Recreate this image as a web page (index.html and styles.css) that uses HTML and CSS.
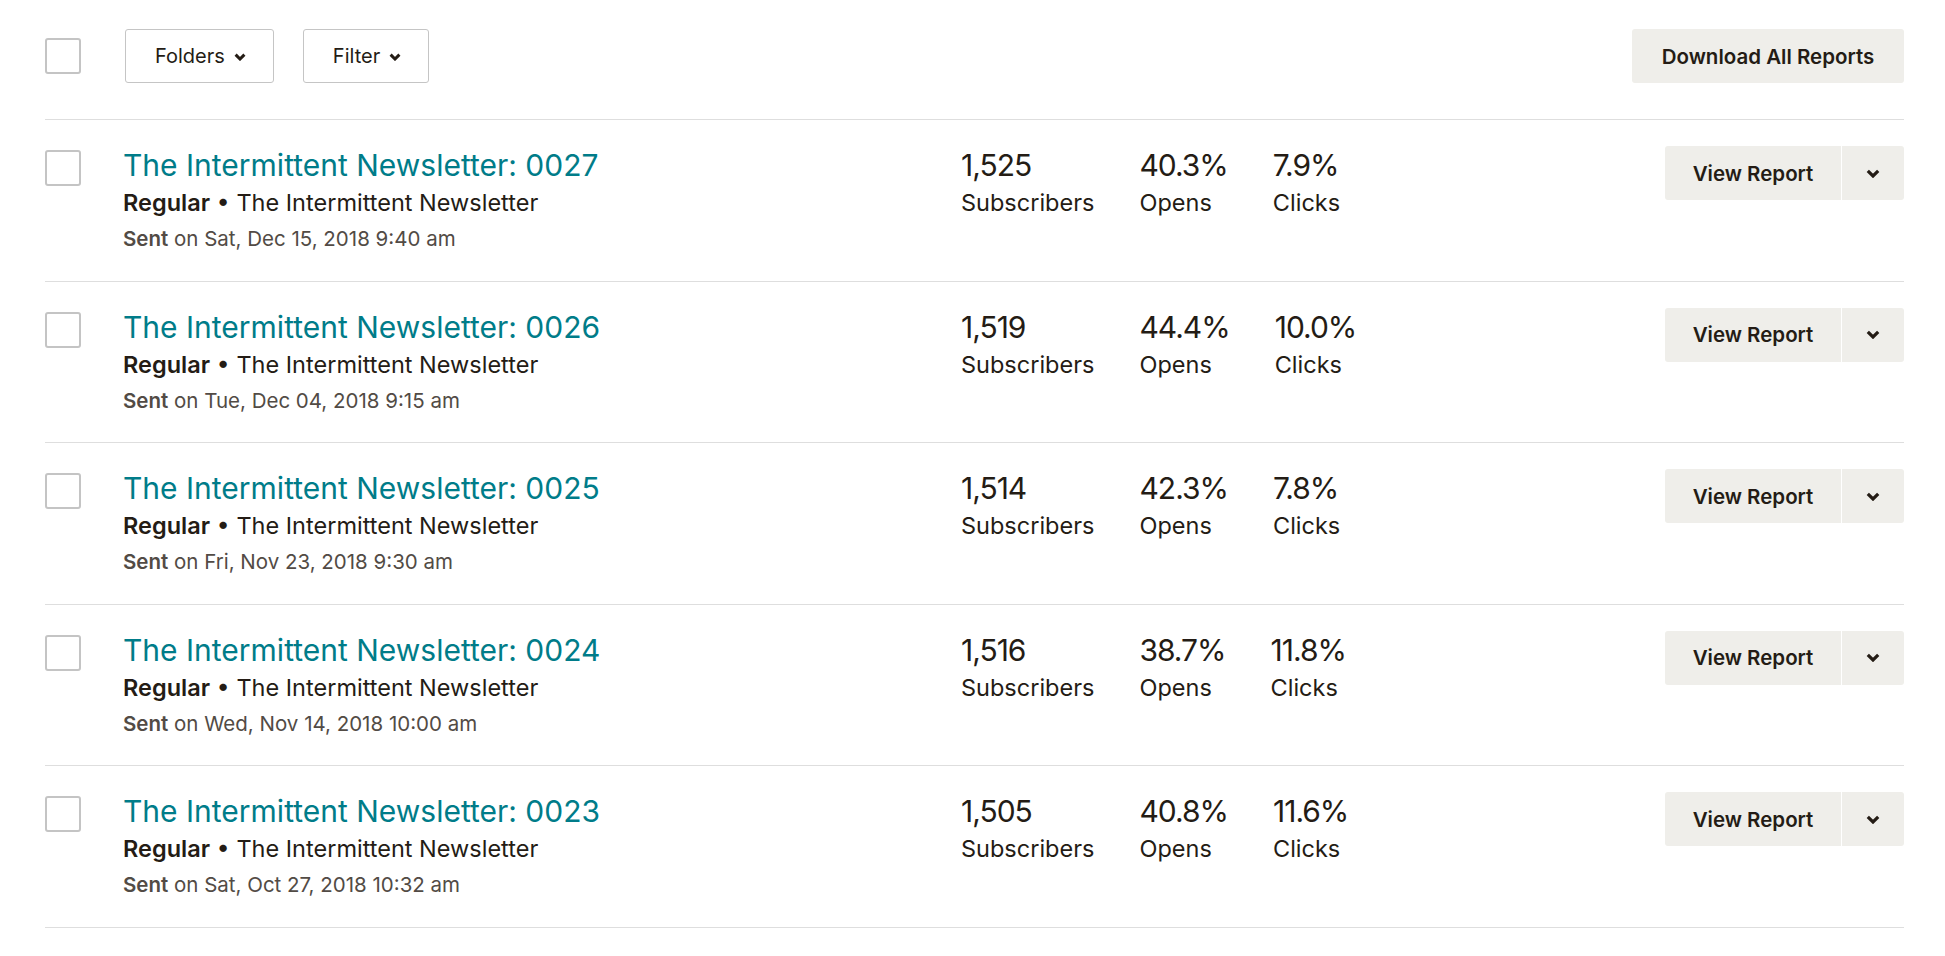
FILE: index.html
```html
<!DOCTYPE html>
<html lang="en">
<head>
<meta charset="utf-8">
<title>Campaign Reports</title>
<link rel="stylesheet" href="styles.css">
</head>
<body>
<div class="page">
  <div class="toolbar">
    <span class="checkbox"></span>
    <button class="btn-outline">Folders <svg class="chev" viewBox="0 0 12 8" width="12" height="8"><path d="M1.6 1.6 L6 6 L10.4 1.6" fill="none" stroke="currentColor" stroke-width="3"/></svg></button>
    <button class="btn-outline">Filter <svg class="chev" viewBox="0 0 12 8" width="12" height="8"><path d="M1.6 1.6 L6 6 L10.4 1.6" fill="none" stroke="currentColor" stroke-width="3"/></svg></button>
    <button class="btn-solid download">Download All Reports</button>
  </div>

  <div class="list">
    <div class="row">
      <span class="checkbox row-check"></span>
      <div class="info">
        <a class="title">The Intermittent Newsletter: 0027</a>
        <div class="sub"><b>Regular</b> • The Intermittent Newsletter</div>
        <div class="date"><b>Sent</b> on Sat, Dec 15, 2018 9:40 am</div>
      </div>
      <div class="stats">
        <div class="stat"><div class="num">1,525</div><div class="lbl">Subscribers</div></div>
        <div class="stat"><div class="num">40.3%</div><div class="lbl">Opens</div></div>
        <div class="stat"><div class="num">7.9%</div><div class="lbl">Clicks</div></div>
      </div>
      <div class="split">
        <button class="btn-solid split-main">View Report</button>
        <button class="btn-solid split-toggle"><svg viewBox="0 0 14 9" width="14" height="9"><path d="M1.8 1.8 L7 7 L12.2 1.8" fill="none" stroke="currentColor" stroke-width="3.2"/></svg></button>
      </div>
    </div>

    <div class="row">
      <span class="checkbox row-check"></span>
      <div class="info">
        <a class="title">The Intermittent Newsletter: 0026</a>
        <div class="sub"><b>Regular</b> • The Intermittent Newsletter</div>
        <div class="date"><b>Sent</b> on Tue, Dec 04, 2018 9:15 am</div>
      </div>
      <div class="stats">
        <div class="stat"><div class="num">1,519</div><div class="lbl">Subscribers</div></div>
        <div class="stat"><div class="num">44.4%</div><div class="lbl">Opens</div></div>
        <div class="stat"><div class="num">10.0%</div><div class="lbl">Clicks</div></div>
      </div>
      <div class="split">
        <button class="btn-solid split-main">View Report</button>
        <button class="btn-solid split-toggle"><svg viewBox="0 0 14 9" width="14" height="9"><path d="M1.8 1.8 L7 7 L12.2 1.8" fill="none" stroke="currentColor" stroke-width="3.2"/></svg></button>
      </div>
    </div>

    <div class="row">
      <span class="checkbox row-check"></span>
      <div class="info">
        <a class="title">The Intermittent Newsletter: 0025</a>
        <div class="sub"><b>Regular</b> • The Intermittent Newsletter</div>
        <div class="date"><b>Sent</b> on Fri, Nov 23, 2018 9:30 am</div>
      </div>
      <div class="stats">
        <div class="stat"><div class="num">1,514</div><div class="lbl">Subscribers</div></div>
        <div class="stat"><div class="num">42.3%</div><div class="lbl">Opens</div></div>
        <div class="stat"><div class="num">7.8%</div><div class="lbl">Clicks</div></div>
      </div>
      <div class="split">
        <button class="btn-solid split-main">View Report</button>
        <button class="btn-solid split-toggle"><svg viewBox="0 0 14 9" width="14" height="9"><path d="M1.8 1.8 L7 7 L12.2 1.8" fill="none" stroke="currentColor" stroke-width="3.2"/></svg></button>
      </div>
    </div>

    <div class="row">
      <span class="checkbox row-check"></span>
      <div class="info">
        <a class="title">The Intermittent Newsletter: 0024</a>
        <div class="sub"><b>Regular</b> • The Intermittent Newsletter</div>
        <div class="date"><b>Sent</b> on Wed, Nov 14, 2018 10:00 am</div>
      </div>
      <div class="stats">
        <div class="stat"><div class="num">1,516</div><div class="lbl">Subscribers</div></div>
        <div class="stat"><div class="num">38.7%</div><div class="lbl">Opens</div></div>
        <div class="stat"><div class="num">11.8%</div><div class="lbl">Clicks</div></div>
      </div>
      <div class="split">
        <button class="btn-solid split-main">View Report</button>
        <button class="btn-solid split-toggle"><svg viewBox="0 0 14 9" width="14" height="9"><path d="M1.8 1.8 L7 7 L12.2 1.8" fill="none" stroke="currentColor" stroke-width="3.2"/></svg></button>
      </div>
    </div>

    <div class="row">
      <span class="checkbox row-check"></span>
      <div class="info">
        <a class="title">The Intermittent Newsletter: 0023</a>
        <div class="sub"><b>Regular</b> • The Intermittent Newsletter</div>
        <div class="date"><b>Sent</b> on Sat, Oct 27, 2018 10:32 am</div>
      </div>
      <div class="stats">
        <div class="stat"><div class="num">1,505</div><div class="lbl">Subscribers</div></div>
        <div class="stat"><div class="num">40.8%</div><div class="lbl">Opens</div></div>
        <div class="stat"><div class="num">11.6%</div><div class="lbl">Clicks</div></div>
      </div>
      <div class="split">
        <button class="btn-solid split-main">View Report</button>
        <button class="btn-solid split-toggle"><svg viewBox="0 0 14 9" width="14" height="9"><path d="M1.8 1.8 L7 7 L12.2 1.8" fill="none" stroke="currentColor" stroke-width="3.2"/></svg></button>
      </div>
    </div>
  </div>
</div>
</body>
</html>
```

FILE: styles.css
```css
* { box-sizing: border-box; }

body {
  margin: 0;
  background: #ffffff;
  color: #241c15;
  font-family: Inter, "Liberation Sans", Arial, sans-serif;
}

.page {
  padding: 29px 41px 0 45px;
}

.toolbar {
  display: flex;
  align-items: center;
  height: 54px;
  margin-bottom: 36px;
}

.checkbox {
  display: block;
  width: 36px;
  height: 36px;
  border: 2px solid #c4c4c4;
  border-radius: 3px;
  background: #fff;
  flex: 0 0 36px;
}

.btn-outline {
  display: inline-flex;
  align-items: center;
  gap: 9px;
  height: 54px;
  padding: 0 27px 0 29px;
  border: 1px solid #c5c5c5;
  border-radius: 3px;
  background: #fff;
  color: #241c15;
  font-family: inherit;
  font-size: 20px;
  font-weight: 400;
  margin-left: 29px;
}

.toolbar .checkbox + .btn-outline {
  margin-left: 44px;
}

.chev {
  display: block;
  margin-top: 1px;
}

.btn-solid {
  display: inline-flex;
  align-items: center;
  justify-content: center;
  height: 54px;
  border: 0;
  border-radius: 3px;
  background: #efeeea;
  color: #241c15;
  font-family: inherit;
  font-size: 20.5px;
  font-weight: 600;
}

.download {
  margin-left: auto;
  width: 272px;
}

.list {
  border-bottom: 1px solid #dedede;
}

.row {
  display: flex;
  align-items: flex-start;
  height: 161.6px;
  padding-top: 27px;
  border-top: 1px solid #dedede;
}

.row-check {
  margin-top: 3px;
}

.info {
  flex: 0 0 838px;
  margin-left: 42px;
  display: flex;
  flex-direction: column;
}

.title {
  font-size: 30px;
  line-height: 36px;
  color: #007c89;
  text-decoration: none;
}

.sub {
  font-size: 23.5px;
  line-height: 30px;
  margin-top: 5px;
}

.sub b {
  font-weight: 600;
}

.date {
  font-size: 20.5px;
  line-height: 26px;
  margin-top: 8px;
  color: #524b45;
}

.date b {
  font-weight: 600;
}

.stats {
  display: flex;
  gap: 45px;
}

.num {
  font-size: 30px;
  line-height: 36px;
  letter-spacing: -1px;
}

.lbl {
  font-size: 23.5px;
  line-height: 30px;
  margin-top: 5px;
}

.split {
  display: flex;
  margin-left: auto;
  margin-top: -1px;
  gap: 1px;
}

.split-main {
  width: 176px;
  border-radius: 3px 0 0 3px;
}

.split-toggle {
  width: 62px;
  border-radius: 0 3px 3px 0;
}
```
